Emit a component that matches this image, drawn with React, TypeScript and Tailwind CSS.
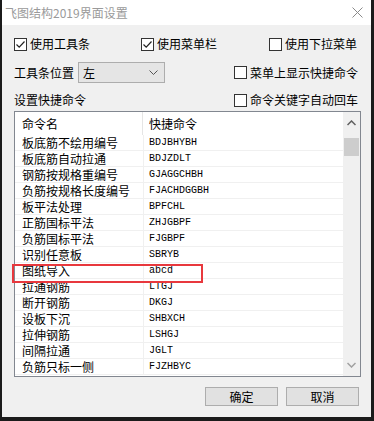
const rows: [string, string][] = [
  ['板底筋不绘用编号', 'BDJBHYBH'],
  ['板底筋自动拉通', 'BDJZDLT'],
  ['钢筋按规格重编号', 'GJAGGCHBH'],
  ['负筋按规格长度编号', 'FJACHDGGBH'],
  ['板平法处理', 'BPFCHL'],
  ['正筋国标平法', 'ZHJGBPF'],
  ['负筋国标平法', 'FJGBPF'],
  ['识别任意板', 'SBRYB'],
  ['图纸导入', 'abcd'],
  ['拉通钢筋', 'LTGJ'],
  ['断开钢筋', 'DKGJ'],
  ['设板下沉', 'SHBXCH'],
  ['拉伸钢筋', 'LSHGJ'],
  ['间隔拉通', 'JGLT'],
  ['负筋只标一侧', 'FJZHBYC'],
];

function CheckBox({ checked, label }: { checked: boolean; label: string }) {
  return (
    <div className="flex items-center gap-[3px]">
      <div className="w-[13px] h-[13px] border border-[#333] bg-white flex items-center justify-center">
        {checked && (
          <svg width="11" height="11" viewBox="0 0 11 11">
            <path d="M1.5 5.5 L4.2 8.2 L9.5 2.5" fill="none" stroke="#222" strokeWidth="1.2" />
          </svg>
        )}
      </div>
      <span>{label}</span>
    </div>
  );
}

export default function App() {
  return (
    <div
      className="w-[374px] h-[421px] bg-[#1b1b1b] pl-[2px] pr-[3px] pb-[4px] text-[12px] text-black leading-none"
      style={{ fontFamily: '"Noto Sans CJK SC", sans-serif' }}
    >
      <div className="h-full bg-[#f0f0f0] flex flex-col">
        {/* Title bar */}
        <div className="h-[25px] bg-white flex items-center justify-between pl-[3px] pr-[8px] shrink-0">
          <span className="text-[#9a9a9a] text-[12px]">飞图结构2019界面设置</span>
          <svg width="11" height="11" viewBox="0 0 11 11">
            <path d="M0.5 0.5 L10.5 10.5 M10.5 0.5 L0.5 10.5" stroke="#8a8a8a" strokeWidth="1" />
          </svg>
        </div>

        <div className="flex flex-col pl-[12px] pr-[10px] pt-[9px]">
          {/* Row 1 */}
          <div className="h-[20px] flex items-center">
            <div className="w-[127px]"><CheckBox checked label="使用工具条" /></div>
            <div className="w-[128px]"><CheckBox checked label="使用菜单栏" /></div>
            <CheckBox checked={false} label="使用下拉菜单" />
          </div>

          {/* Row 2 */}
          <div className="h-[21px] mt-[8px] flex items-center">
            <span className="w-[64px]">工具条位置</span>
            <div className="w-[87px] h-[21px] bg-[#e5e5e5] border border-[#adadad] flex items-center justify-between pl-[4px] pr-[6px]">
              <span>左</span>
              <svg width="9" height="6" viewBox="0 0 9 6">
                <path d="M0.5 0.5 L4.5 4.5 L8.5 0.5" fill="none" stroke="#555" strokeWidth="1" />
              </svg>
            </div>
            <div className="ml-[69px]"><CheckBox checked={false} label="菜单上显示快捷命令" /></div>
          </div>

          {/* Row 3 */}
          <div className="h-[20px] mt-[7px] flex items-center">
            <span className="w-[220px]">设置快捷命令</span>
            <CheckBox checked={false} label="命令关键字自动回车" />
          </div>

          {/* List */}
          <div className="relative mt-[1px] w-[347px] h-[266px] border border-[#828790] bg-white flex">
            <div className="flex-1 flex flex-col">
              <div className="h-[23px] flex items-center shrink-0">
                <div className="w-[128px] pl-[7px] h-full flex items-center border-r border-[#e5e5e5]">命令名</div>
                <div className="pl-[6px]">快捷命令</div>
              </div>
              {rows.map(([name, code]) => (
                <div key={name} className="h-[16px] flex border-b border-[#f0f0f0] shrink-0">
                  <div className="w-[129px] pl-[7px] flex items-center border-r border-[#f0f0f0]">{name}</div>
                  <div
                    className="pl-[5px] flex items-center text-[10px]"
                    style={{ fontFamily: '"Liberation Mono", monospace' }}
                  >
                    {code}
                  </div>
                </div>
              ))}
            </div>

            {/* Scrollbar */}
            <div className="w-[17px] bg-[#f0f0f0] flex flex-col items-center">
              <div className="h-[22px] w-full flex items-center justify-center">
                <svg width="9" height="6" viewBox="0 0 9 6">
                  <path d="M0.5 5 L4.5 1 L8.5 5" fill="none" stroke="#606060" strokeWidth="1.5" />
                </svg>
              </div>
              <div className="w-[15px] h-[18px] bg-[#cdcdcd] mt-[4px]" />
              <div className="flex-1" />
              <div className="h-[22px] w-full flex items-center justify-center">
                <svg width="9" height="6" viewBox="0 0 9 6">
                  <path d="M0.5 1 L4.5 5 L8.5 1" fill="none" stroke="#a0a0a0" strokeWidth="1.5" />
                </svg>
              </div>
            </div>

            {/* Highlight */}
            <div className="absolute left-[-3px] top-[152px] w-[191px] h-[19px] border-2 border-[#e8383d]" />
          </div>

          {/* Buttons */}
          <div className="mt-[10px] flex justify-end gap-[8px] pr-[2px]">
            <button className="w-[73px] h-[19px] bg-[#e1e1e1] border border-[#adadad] flex items-center justify-center">确定</button>
            <button className="w-[73px] h-[19px] bg-[#e1e1e1] border border-[#adadad] flex items-center justify-center">取消</button>
          </div>
        </div>
      </div>
    </div>
  );
}
